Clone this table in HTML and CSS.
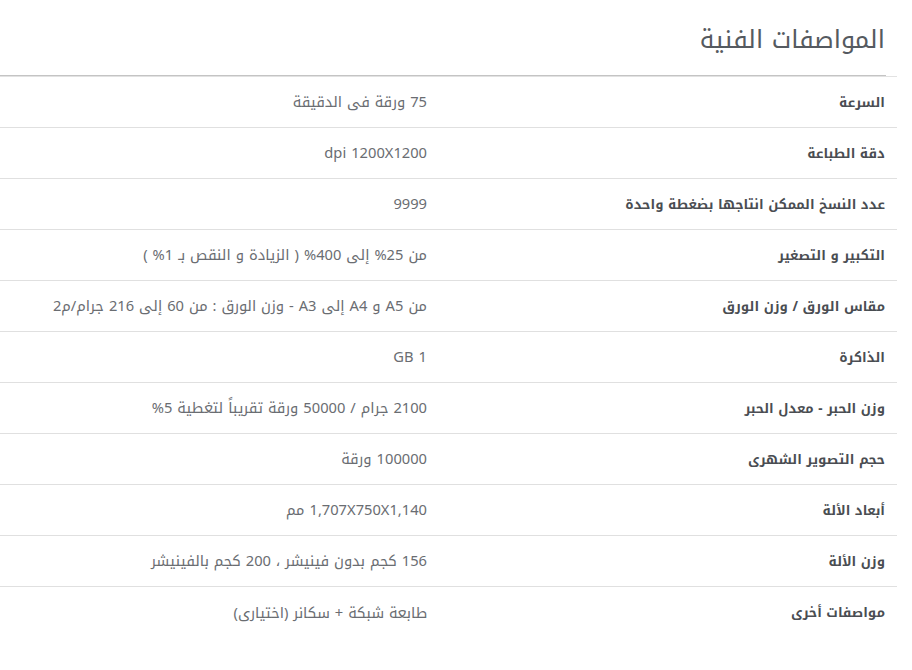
FILE: index.html
```html
<!DOCTYPE html>
<html lang="ar" dir="rtl">
<head>
<meta charset="utf-8">
<link rel="stylesheet" href="styles.css">
</head>
<body>
<div class="specs">
  <h2 class="specs-title">المواصفات الفنية</h2>
  <div class="specs-table">
    <div class="row"><div class="label">السرعة</div><div class="value">75 ورقة فى الدقيقة</div></div>
    <div class="row"><div class="label">دقة الطباعة</div><div class="value">dpi 1200X1200</div></div>
    <div class="row"><div class="label">عدد النسخ الممكن انتاجها بضغطة واحدة</div><div class="value">9999</div></div>
    <div class="row"><div class="label">التكبير و التصغير</div><div class="value">من 25% إلى 400% ( الزيادة و النقص بـ 1% )</div></div>
    <div class="row"><div class="label">مقاس الورق / وزن الورق</div><div class="value">من A5 و A4 إلى A3 - وزن الورق : من 60 إلى 216 جرام/م2</div></div>
    <div class="row"><div class="label">الذاكرة</div><div class="value">1 GB</div></div>
    <div class="row"><div class="label">وزن الحبر - معدل الحبر</div><div class="value">2100 جرام / 50000 ورقة تقريباً لتغطية 5%</div></div>
    <div class="row"><div class="label">حجم التصوير الشهرى</div><div class="value">100000 ورقة</div></div>
    <div class="row"><div class="label">أبعاد الألة</div><div class="value">1,707X750X1,140 مم</div></div>
    <div class="row"><div class="label">وزن الألة</div><div class="value">156 كجم بدون فينيشر ، 200 كجم بالفينيشر</div></div>
    <div class="row last"><div class="label">مواصفات أخرى</div><div class="value">طابعة شبكة + سكانر (اختيارى)</div></div>
  </div>
</div>
</body>
</html>
```
FILE: styles.css
```css
html, body {
  margin: 0;
  padding: 0;
  background: #ffffff;
}
body {
  font-family: "Noto Kufi Arabic", "Droid Arabic Kufi", "Noto Sans Arabic", "DejaVu Sans", sans-serif;
  direction: rtl;
}
.specs {
  width: 897px;
  margin-left: 0;
  margin-right: auto;
}
.specs-title {
  margin: 0 11px 0 0;
  height: 76px;
  box-sizing: border-box;
  padding: 22px 1px 0 0;
  font-size: 25px;
  font-weight: normal;
  line-height: 36px;
  color: #555a60;
  border-bottom: 1px solid #c4c4c4;
}
.specs-table {
  border-top: 1px solid #e2e2e2;
}
.row {
  display: grid;
  grid-template-columns: 458px 1fr;
  height: 51px;
  box-sizing: border-box;
  border-bottom: 1px solid #e0e0e0;
  align-items: center;
}
.row.last {
  border-bottom: none;
}
.label {
  padding: 0 12px;
  font-size: 13.3px;
  font-weight: bold;
  color: #4a4d52;
}
.value {
  padding: 0 12px;
  font-size: 14.7px;
  color: #6a6d72;
  white-space: nowrap;
}
```
